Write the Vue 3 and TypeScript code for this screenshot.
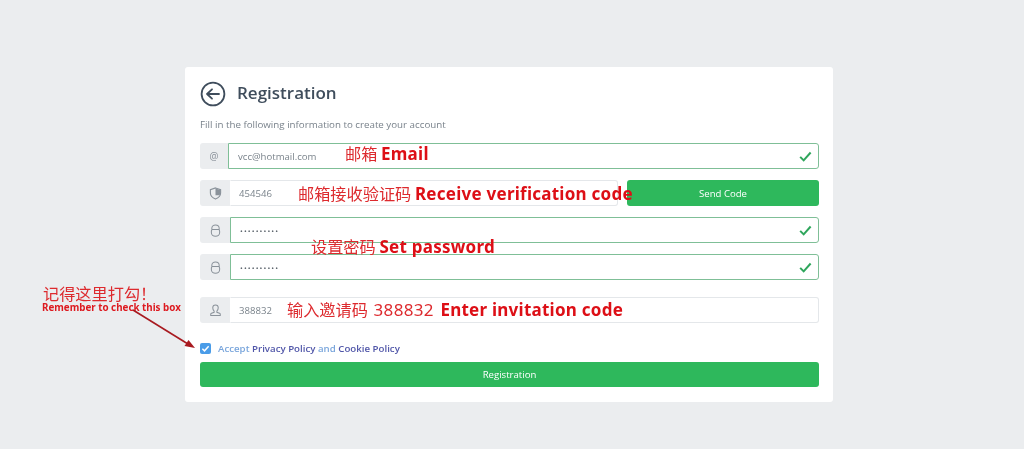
<script setup lang="ts">
interface Row { key: string; value: string }
const pwRows: Row[] = [
  { key: 'p1', value: '••••••••••' },
  { key: 'p2', value: '••••••••••' },
]
</script>

<template>
  <div class="page">
    <div class="card">
      <header class="head">
        <svg class="back" viewBox="0 0 26 26" width="26" height="26" fill="none" stroke="#3f4d5c">
          <circle cx="13" cy="13" r="11.4" stroke-width="1.8" />
          <path d="M19 13H7.500M12 8.300L7 13l5 4.700" stroke-width="1.800" stroke-linecap="round" stroke-linejoin="round" />
        </svg>
        <h1 class="title">Registration</h1>
      </header>
      <p class="sub">Fill in the following information to create your account</p>

      <div class="group gap">
        <span class="addon narrow"><span class="at">@</span></span>
        <div class="field valid">
          <span class="val">vcc@hotmail.com</span>
          <svg class="check" viewBox="0 0 14 12" width="13" height="11" fill="none" stroke="#2fa65c" stroke-width="2.2"><path d="M1.200 6.400l3.800 3.800 7.600-8.600" /></svg>
        </div>
      </div>

      <div class="code-row gap">
        <div class="group grow">
          <span class="addon">
            <svg viewBox="0 0 14 14" width="13" height="13" fill="none" stroke="#8a929a" stroke-width="1.200"><path d="M7 1l5.500 1.800v3.700c0 3.200-2.400 5.300-5.500 6.500-3.100-1.200-5.500-3.300-5.500-6.500V2.800z" /><path d="M7 1.500l5 1.700v3.300c0 1-.2 1.700-.6 2.500H7z" fill="#8a929a" stroke="none" /></svg>
          </span>
          <div class="field plain"><span class="val">454546</span></div>
        </div>
        <button class="btn send" type="button">Send Code</button>
      </div>

      <div v-for="r in pwRows" :key="r.key" class="group gap">
        <span class="addon">
          <svg viewBox="0 0 12 14" width="11" height="13" fill="none" stroke="#8a929a" stroke-width="1.100"><path d="M2 6V4.600a4 3.700 0 0 1 8 0V6M3 6h6a1.500 1.500 0 0 1 1.500 1.500v2a4.500 3.800 0 0 1-9 0v-2A1.500 1.500 0 0 1 3 6z" /></svg>
        </span>
        <div class="field valid">
          <span class="val dots">{{ r.value }}</span>
          <svg class="check" viewBox="0 0 14 12" width="13" height="11" fill="none" stroke="#2fa65c" stroke-width="2.2"><path d="M1.200 6.400l3.800 3.800 7.600-8.600" /></svg>
        </div>
      </div>

      <div class="group invite">
        <span class="addon">
          <svg viewBox="0 0 12 14" width="11" height="13" fill="none" stroke="#8a929a" stroke-width="1.100"><path d="M6 1c1.900 0 3 1.300 3 3.100 0 1.600-.7 2.800-1.500 3.500v1.400l2.900 1.100c.5.200.8.600.8 1.100v1.200H.8v-1.200c0-.5.300-.9.800-1.100L4.500 9V7.600C3.700 6.900 3 5.700 3 4.100 3 2.300 4.100 1 6 1z" /></svg>
        </span>
        <div class="field plain"><span class="val">388832</span></div>
      </div>

      <label class="agree">
        <span class="box">
          <svg viewBox="0 0 10 10" width="9" height="9" fill="none" stroke="#fff" stroke-width="1.600"><path d="M1.500 5.200l2.400 2.400 4.600-5" /></svg>
        </span>
        <span class="agree-text">Accept <b class="link">Privacy Policy</b> and <b class="link">Cookie Policy</b></span>
      </label>

      <button class="btn submit" type="button">Registration</button>
    </div>

    <!-- annotations drawn over the screenshot -->
    <span class="note zh n-email">邮箱 <b>Email</b></span>
    <span class="note zh n-code">邮箱接收验证码 <b>Receive verification code</b></span>
    <span class="note zh n-pass">设置密码 <b>Set password</b></span>
    <span class="note zh n-inv">输入邀请码 <i class="num">388832</i> <b>Enter invitation code</b></span>
    <span class="note n-rem-zh">记得这里打勾！</span>
    <span class="note n-rem-en">Remember to check this box</span>
    <svg class="arrow" viewBox="0 0 70 50" width="70" height="50" fill="none">
      <path d="M1 1L56 35" stroke="#a81a20" stroke-width="1.600" />
      <path d="M63 39L52.500 37L56.500 31Z" fill="#a81a20" />
    </svg>
  </div>
</template>

<style scoped>
.page {
  position: relative;
  width: 1024px;
  height: 449px;
  overflow: hidden;
  background: #ebedef;
  padding: 67px 0 0 185px;
  box-sizing: border-box;
  font-family: "Open Sans", "Noto Sans", "Noto Sans CJK SC", sans-serif;
  filter: blur(0.3px);
}
.card {
  width: 648px;
  height: 335px;
  box-sizing: border-box;
  background: #fff;
  border-radius: 3px;
  padding: 14px 14px 0 15px;
}
.head {
  display: flex;
  align-items: center;
  gap: 11px;
  height: 26px;
}
.back { flex: none; }
.title {
  margin: -2px 0 0;
  font-size: 17px;
  line-height: 26px;
  font-weight: 600;
  color: #3f4d5c;
}
.sub {
  margin: 11px 0 0;
  height: 25px;
  font-size: 9.750px;
  line-height: 14px;
  color: #79828b;
}
.group { display: flex; height: 26px; }
.gap { margin-bottom: 11px; }
.grow { flex: 1; min-width: 0; }
.code-row { display: flex; gap: 9px; height: 26px; }
.addon {
  flex: none;
  width: 30px;
  display: flex;
  align-items: center;
  justify-content: center;
  background: #ebedef;
  border-radius: 3px 0 0 3px;
}
.narrow { width: 28px; }
.at { font-size: 10px; color: #8a929a; }
.field {
  flex: 1;
  min-width: 0;
  display: flex;
  align-items: center;
  justify-content: space-between;
  padding: 0 6px 0 9px;
  box-sizing: border-box;
  border: 1px solid #e4e7ea;
  border-left-color: transparent;
  border-radius: 0 3px 3px 0;
  background: #fff;
}
.plain { padding-left: 8px; }
.valid { border-color: #7fbf97; }
.val { font-size: 9.600px; color: #7b848c; }
.dots { letter-spacing: 1.100px; font-size: 7.500px; line-height: 12px; margin-top: 1px; color: #5f676f; }
.check { flex: none; }
.btn {
  border: 0;
  background: #2eb85c;
  color: #fff;
  border-radius: 3px;
  font-family: inherit;
  font-size: 9.600px;
  padding: 0;
}
.send { flex: none; width: 192px; height: 26px; }
.invite { margin-top: 17px; }
.agree {
  display: flex;
  align-items: center;
  gap: 7px;
  margin-top: 19px;
  height: 12px;
}
.box {
  width: 11px;
  height: 11px;
  border-radius: 2px;
  background: #4a9ce8;
  display: flex;
  align-items: center;
  justify-content: center;
}
.agree-text { font-size: 9.700px; font-weight: 600; color: #7aa6dc; }
.link { font-weight: 600; color: #4f55a8; }
.submit { display: block; width: 100%; height: 25px; margin-top: 8px; }
.note { position: absolute; white-space: nowrap; }
.zh { font-family: "Noto Sans CJK SC", sans-serif; font-size: 16.200px; line-height: 20px; color: #dd2a2e; }
.zh b { font-family: "Noto Sans", "Open Sans", sans-serif; font-weight: 700; font-size: 17px; letter-spacing: 0.250px; color: #dd0f16; }
.num { font-style: normal; font-family: "Noto Sans", sans-serif; font-size: 17px; letter-spacing: 0.300px; margin: 0 3px 0 2px; }
.n-email { left: 345px; top: 143px; }
.n-code { left: 298px; top: 183px; }
.n-pass { left: 311px; top: 236px; }
.n-inv { left: 287px; top: 299px; }
.n-rem-zh { left: 43px; top: 285px; font-family: "Noto Sans CJK SC", sans-serif; font-size: 16.200px; line-height: 16px; color: #dd2a2e; }
.n-rem-en { left: 42px; top: 301.500px; font-family: "Noto Sans", sans-serif; font-weight: 700; font-size: 9.800px; line-height: 11px; color: #dd1a20; }
.arrow { position: absolute; left: 132px; top: 309px; }
</style>
